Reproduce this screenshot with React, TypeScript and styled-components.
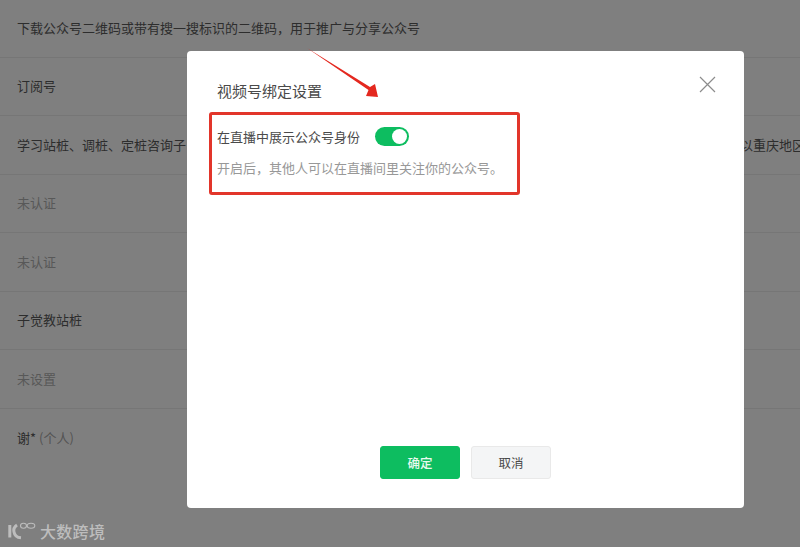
import React from "react";
import styled, { createGlobalStyle } from "styled-components";

const Global = createGlobalStyle`
  html, body { margin: 0; padding: 0; width: 100%; height: 100%; overflow: hidden; background: #fff; }
  body { font-family: "Noto Sans CJK SC", "Liberation Sans", sans-serif; }
`;

const Page = styled.div`
  position: relative;
  width: 800px;
  height: 547px;
  overflow: hidden;
  background: #fff;
`;

const List = styled.div`
  display: flex;
  flex-direction: column;
  margin-top: -1px;
`;

const Row = styled.div<{ $muted?: boolean }>`
  box-sizing: border-box;
  height: 58.5px;
  display: flex;
  align-items: center;
  justify-content: space-between;
  padding: 0 0 1px 17px;
  border-bottom: 1px solid #ececec;
  font-size: 13px;
  white-space: nowrap;
  color: ${(p) => (p.$muted ? "#b0b0b0" : "#5a5a5a")};
  &:last-child { border-bottom: none; }
`;

const RowEnd = styled.span`
  margin-right: -5px;
`;

const Suffix = styled.span`
  color: #a8a8a8;
`;

const Overlay = styled.div`
  position: absolute;
  inset: 0;
  background: rgba(0, 0, 0, 0.5);
`;

const Modal = styled.div`
  position: absolute;
  left: 187px;
  top: 51px;
  width: 557px;
  height: 457px;
  box-sizing: border-box;
  padding: 28px 30px 29px;
  display: flex;
  flex-direction: column;
  background: #fff;
  border-radius: 4px;
`;

const Header = styled.div`
  display: flex;
  justify-content: space-between;
  align-items: flex-start;
`;

const Title = styled.h2`
  margin: 0;
  font-size: 15px;
  line-height: 24px;
  font-weight: 400;
  color: #4a4a4a;
`;

const CloseIcon = styled.svg`
  width: 17px;
  height: 17px;
  margin: -3px -2px 0 0;
  color: #8c8c8c;
`;

const Setting = styled.div`
  flex: 1;
  margin-top: 24px;
`;

const SettingRow = styled.div`
  display: flex;
  align-items: center;
  gap: 15px;
`;

const SettingLabel = styled.span`
  font-size: 13px;
  line-height: 19px;
  color: #4a4a4a;
`;

const Toggle = styled.span`
  position: relative;
  display: block;
  width: 34px;
  height: 19px;
  border-radius: 10px;
  background: #0dbd60;
`;

const Knob = styled.span`
  position: absolute;
  top: 2px;
  right: 2px;
  width: 15px;
  height: 15px;
  border-radius: 50%;
  background: #fff;
`;

const Hint = styled.p`
  margin: 12px 0 0;
  font-size: 13px;
  line-height: 19px;
  color: #989898;
`;

const Footer = styled.div`
  display: flex;
  justify-content: center;
  gap: 11px;
`;

const Button = styled.button<{ $primary?: boolean }>`
  box-sizing: border-box;
  width: 80px;
  height: 33px;
  padding: 0;
  font-family: inherit;
  font-size: 12.5px;
  font-weight: ${(p) => (p.$primary ? 500 : 400)};
  border-radius: 3px;
  border: 1px solid ${(p) => (p.$primary ? "#0dbd60" : "#e9e9e9")};
  background: ${(p) => (p.$primary ? "#0dbd60" : "#f4f5f6")};
  color: ${(p) => (p.$primary ? "#e8f9ef" : "#4a4a4a")};
`;

const Callout = styled.div`
  position: absolute;
  left: 209px;
  top: 112px;
  width: 311px;
  height: 83px;
  box-sizing: border-box;
  border: 3px solid #e2352a;
  border-radius: 3px;
`;

const Arrow = styled.svg`
  position: absolute;
  left: 300px;
  top: 44px;
  width: 90px;
  height: 60px;
`;

const Watermark = styled.div`
  position: absolute;
  left: 8px;
  bottom: 5px;
  display: flex;
  align-items: center;
  gap: 3px;
  color: #bdbdbd;
`;

const WatermarkLogo = styled.svg`
  width: 29px;
  height: 20px;
`;

const WatermarkText = styled.span`
  font-size: 16px;
  line-height: 22px;
  letter-spacing: 0.3px;
  font-weight: 500;
`;

export default function App() {
  return (
    <Page>
      <Global />
      <List>
        <Row>下载公众号二维码或带有搜一搜标识的二维码，用于推广与分享公众号</Row>
        <Row>订阅号</Row>
        <Row>
          <span>学习站桩、调桩、定桩咨询子</span>
          <RowEnd>以重庆地区</RowEnd>
        </Row>
        <Row $muted>未认证</Row>
        <Row $muted>未认证</Row>
        <Row>子觉教站桩</Row>
        <Row $muted>未设置</Row>
        <Row>
          <span>谢* <Suffix>(个人)</Suffix></span>
        </Row>
      </List>
      <Overlay />
      <Modal>
        <Header>
          <Title>视频号绑定设置</Title>
          <CloseIcon viewBox="0 0 17 17" fill="none" stroke="currentColor" strokeWidth="1.2">
            <path d="M1 1 L16 16 M16 1 L1 16" />
          </CloseIcon>
        </Header>
        <Setting>
          <SettingRow>
            <SettingLabel>在直播中展示公众号身份</SettingLabel>
            <Toggle><Knob /></Toggle>
          </SettingRow>
          <Hint>开启后，其他人可以在直播间里关注你的公众号。</Hint>
        </Setting>
        <Footer>
          <Button $primary>确定</Button>
          <Button>取消</Button>
        </Footer>
      </Modal>
      <Callout />
      <Arrow viewBox="0 0 90 60">
        <path d="M7 4 L70 43 L75 40 L78 53 L66 52 L68.5 46 Z" fill="#e4281f" />
      </Arrow>
      <Watermark>
        <WatermarkLogo viewBox="0 0 29 20" fill="none" stroke="currentColor">
          <path d="M1.8 4 V16.5" strokeWidth="3" />
          <path d="M9 4 C6 6 5.5 9 6 11 C6.5 14 9 16.5 13 16.8" strokeWidth="3" />
          <ellipse cx="15.5" cy="4.7" rx="3" ry="2.5" strokeWidth="1.1" />
          <ellipse cx="23" cy="4.7" rx="3.8" ry="2.5" strokeWidth="1.1" />
        </WatermarkLogo>
        <WatermarkText>大数跨境</WatermarkText>
      </Watermark>
    </Page>
  );
}
